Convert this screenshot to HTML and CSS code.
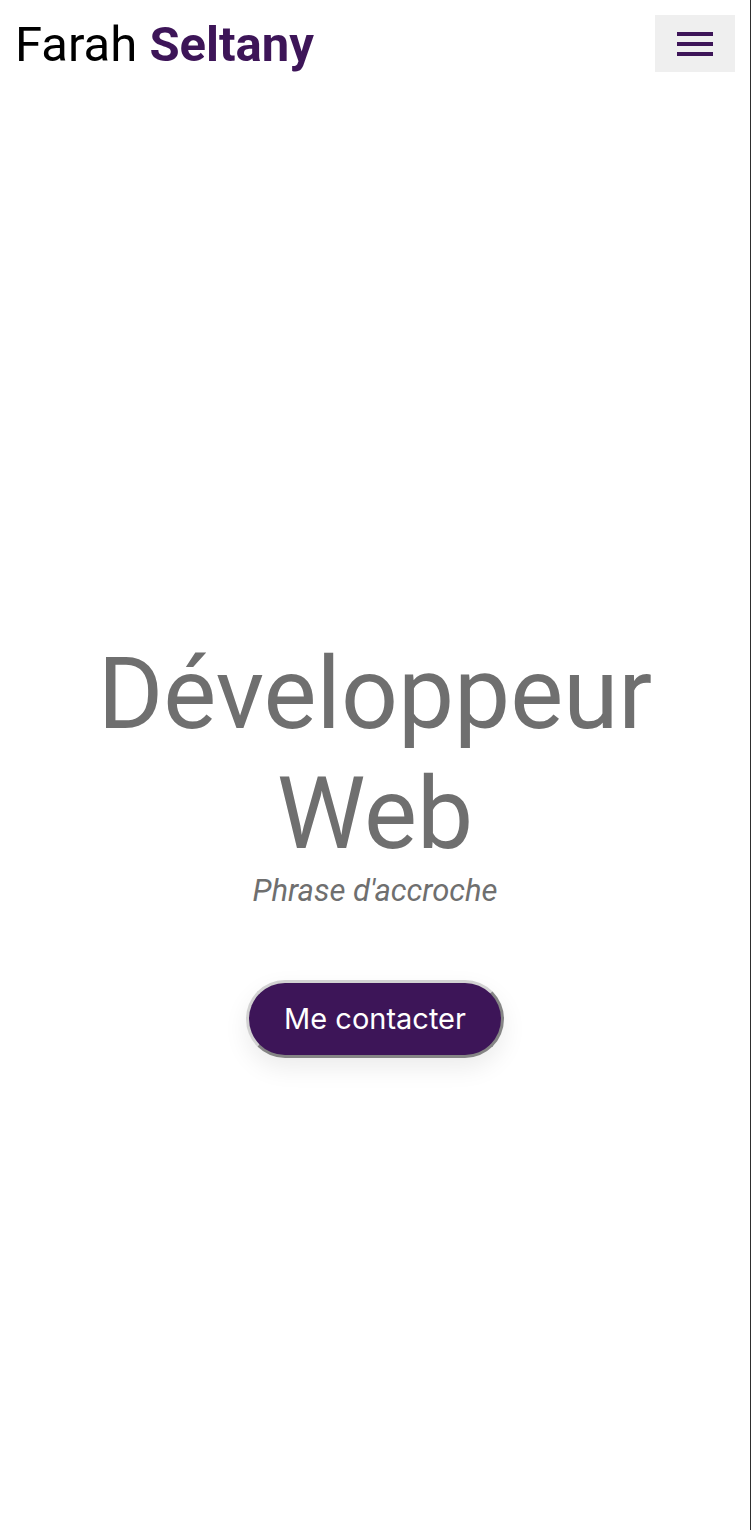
FILE: index.html
```html
<!DOCTYPE html>
<html lang="fr">
<head>
<meta charset="utf-8">
<title>Farah Seltany</title>
<link rel="stylesheet" href="styles.css">
</head>
<body>
<div class="page">
  <header class="header">
    <h1 class="logo">Farah <strong class="logo-accent">Seltany</strong></h1>
    <button class="menu-btn" aria-label="Menu">
      <span class="bar"></span>
      <span class="bar"></span>
      <span class="bar"></span>
    </button>
  </header>
  <main class="hero">
    <h2 class="hero-title">Développeur<br>Web</h2>
    <p class="hero-tagline">Phrase d'accroche</p>
    <button class="cta">Me contacter</button>
  </main>
</div>
</body>
</html>
```

FILE: styles.css
```css
html, body {
  margin: 0;
  padding: 0;
  background: #ffffff;
}

.page {
  width: 750px;
  min-height: 1530px;
  border-right: 1px solid #2e2e2e;
  font-family: Roboto, "Noto Sans", sans-serif;
}

.header {
  display: flex;
  justify-content: space-between;
  align-items: flex-start;
  padding: 15px 15px 0 15px;
}

.logo {
  margin: 0;
  font-size: 49px;
  line-height: 60px;
  font-weight: 400;
  color: #000;
}

.logo-accent {
  font-weight: 700;
  color: #3d1558;
}

.menu-btn {
  width: 80px;
  height: 57px;
  background: #efefef;
  border: none;
  padding: 0;
  display: flex;
  flex-direction: column;
  align-items: center;
  justify-content: center;
  gap: 6px;
  cursor: pointer;
}

.bar {
  display: block;
  width: 36px;
  height: 4px;
  background: #3d1558;
}

.hero {
  display: flex;
  flex-direction: column;
  align-items: center;
  padding-top: 559px;
  text-align: center;
}

.hero-title {
  margin: 0;
  font-size: 100px;
  line-height: 120px;
  font-weight: 400;
  color: #6f6f6f;
}

.hero-tagline {
  margin: 0;
  font-size: 31px;
  line-height: 34px;
  font-style: italic;
  color: #6f6f6f;
}

.cta {
  margin-top: 72px;
  font-family: Inter, "Noto Sans", sans-serif;
  font-size: 29px;
  line-height: 34px;
  color: #ffffff;
  background: #3d1558;
  padding: 19px 35px;
  border-radius: 50px;
  border: 3px solid;
  border-top-color: #d2d2d2;
  border-left-color: #d2d2d2;
  border-bottom-color: #858585;
  border-right-color: #858585;
  box-shadow: 0 10px 24px rgba(0, 0, 0, 0.08);
  cursor: pointer;
}
```
